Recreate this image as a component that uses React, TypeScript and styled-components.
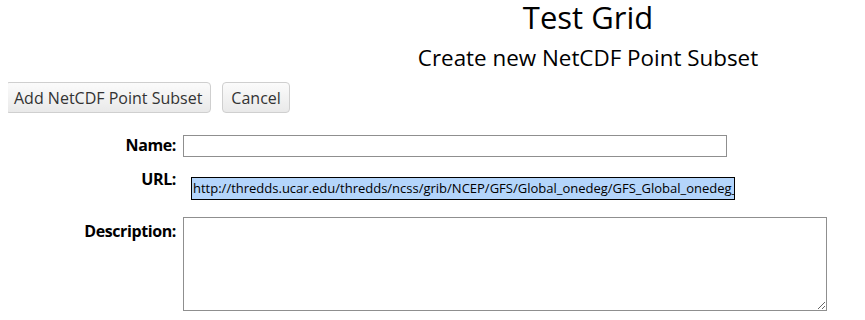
import styled, { createGlobalStyle } from "styled-components";

const GlobalStyle = createGlobalStyle`
  body {
    margin: 0 8px;
    background: #ffffff;
    font-family: "Open Sans", "DejaVu Sans", sans-serif;
    color: #000;
  }
`;

export const Page = styled.div`
  display: flex;
  flex-direction: column;
  width: 849px;
`;

export const Header = styled.header`
  display: flex;
  flex-direction: column;
  align-items: center;
  margin-left: 311px;
`;

export const Title = styled.h1`
  margin: 0;
  font-size: 31px;
  font-weight: 400;
  line-height: 34px;
`;

export const SubTitle = styled.h2`
  margin: 9px 0 0;
  font-size: 22.4px;
  font-weight: 400;
  line-height: 30px;
`;

export const Toolbar = styled.div`
  display: flex;
  gap: 11px;
  margin: 9px 0 0 -3px;
`;

export const Button = styled.button`
  height: 31px;
  padding: 0 8px;
  font-family: "Open Sans", sans-serif;
  font-size: 16px;
  color: #333;
  background: linear-gradient(#fbfbfb, #e9e9e9);
  border: 1px solid #cfcfcf;
  border-radius: 4px;
`;

export const Form = styled.div`
  display: flex;
  flex-direction: column;
  margin-top: 22px;
`;

type RowProps = { $top: number; $labelTop: number };

export const Row = styled.div<RowProps>`
  display: flex;
  align-items: flex-start;
  margin-top: ${({ $top }) => $top}px;

  label {
    margin-top: ${({ $labelTop }) => $labelTop}px;
  }
`;

export const Label = styled.label`
  width: 168px;
  flex: none;
  text-align: right;
  font-size: 16px;
  font-weight: 700;
  line-height: 22px;
  letter-spacing: -0.4px;
`;

export const TextInput = styled.input`
  box-sizing: border-box;
  width: 544px;
  height: 22px;
  margin: 0 0 0 7px;
  border: 1px solid #8f8f8f;
  padding: 0 3px;
  font-family: "Open Sans", sans-serif;
  font-size: 13px;
`;

export const UrlField = styled.div`
  box-sizing: border-box;
  width: 544px;
  height: 23px;
  margin-left: 15px;
  border: 1px solid #000;
  background: #b4d5fb;
  padding: 0 1px;
  overflow: hidden;
  white-space: nowrap;
  font-family: "Open Sans", sans-serif;
  font-size: 13px;
  line-height: 21px;
  color: #000;
`;

export const TextArea = styled.textarea`
  box-sizing: border-box;
  width: 644px;
  height: 94px;
  margin: 0 0 0 7px;
  border: 1px solid #8f8f8f;
  padding: 2px;
  font-family: "Open Sans", sans-serif;
  font-size: 13px;
`;

export default function App() {
  return (
    <Page>
      <GlobalStyle />
      <Header>
        <Title>Test Grid</Title>
        <SubTitle>Create new NetCDF Point Subset</SubTitle>
      </Header>
      <Toolbar>
        <Button>Add NetCDF Point Subset</Button>
        <Button>Cancel</Button>
      </Toolbar>
      <Form>
        <Row $top={0} $labelTop={-1}>
          <Label>Name:</Label>
          <TextInput type="text" />
        </Row>
        <Row $top={20} $labelTop={-9}>
          <Label>URL:</Label>
          <UrlField role="textbox">
            http://thredds.ucar.edu/thredds/ncss/grib/NCEP/GFS/Global_onedeg/GFS_Global_onedeg_20131120_0000.grib2
          </UrlField>
        </Row>
        <Row $top={17} $labelTop={3}>
          <Label>Description:</Label>
          <TextArea />
        </Row>
      </Form>
    </Page>
  );
}
